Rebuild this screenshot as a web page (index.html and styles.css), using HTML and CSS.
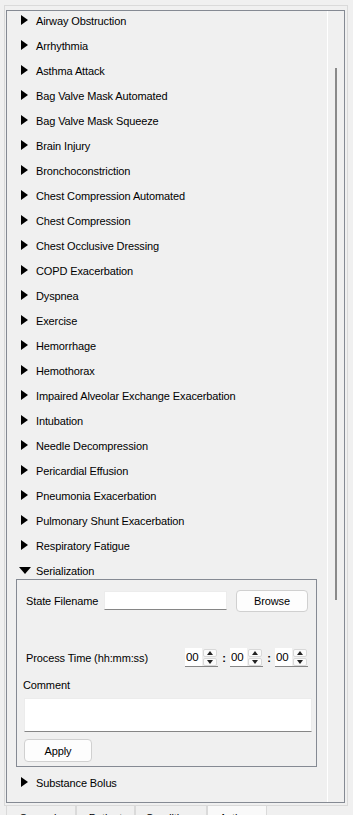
FILE: index.html
```html
<!DOCTYPE html>
<html>
<head>
<meta charset="utf-8">
<link rel="stylesheet" href="styles.css">
</head>
<body>
<div class="pane">
  <div class="scroll">
    <div class="content">
      <div class="list">
        <div class="row"><span class="tri-r"></span><span>Airway Obstruction</span></div>
        <div class="row"><span class="tri-r"></span><span>Arrhythmia</span></div>
        <div class="row"><span class="tri-r"></span><span>Asthma Attack</span></div>
        <div class="row"><span class="tri-r"></span><span>Bag Valve Mask Automated</span></div>
        <div class="row"><span class="tri-r"></span><span>Bag Valve Mask Squeeze</span></div>
        <div class="row"><span class="tri-r"></span><span>Brain Injury</span></div>
        <div class="row"><span class="tri-r"></span><span>Bronchoconstriction</span></div>
        <div class="row"><span class="tri-r"></span><span>Chest Compression Automated</span></div>
        <div class="row"><span class="tri-r"></span><span>Chest Compression</span></div>
        <div class="row"><span class="tri-r"></span><span>Chest Occlusive Dressing</span></div>
        <div class="row"><span class="tri-r"></span><span>COPD Exacerbation</span></div>
        <div class="row"><span class="tri-r"></span><span>Dyspnea</span></div>
        <div class="row"><span class="tri-r"></span><span>Exercise</span></div>
        <div class="row"><span class="tri-r"></span><span>Hemorrhage</span></div>
        <div class="row"><span class="tri-r"></span><span>Hemothorax</span></div>
        <div class="row"><span class="tri-r"></span><span>Impaired Alveolar Exchange Exacerbation</span></div>
        <div class="row"><span class="tri-r"></span><span>Intubation</span></div>
        <div class="row"><span class="tri-r"></span><span>Needle Decompression</span></div>
        <div class="row"><span class="tri-r"></span><span>Pericardial Effusion</span></div>
        <div class="row"><span class="tri-r"></span><span>Pneumonia Exacerbation</span></div>
        <div class="row"><span class="tri-r"></span><span>Pulmonary Shunt Exacerbation</span></div>
        <div class="row"><span class="tri-r"></span><span>Respiratory Fatigue</span></div>
        <div class="row row-open"><span class="tri-d"></span><span>Serialization</span></div>
        <div class="group">
          <div class="g-row1">
            <span class="lbl lbl-state">State Filename</span>
            <span class="input"></span>
            <span class="btn btn-browse">Browse</span>
          </div>
          <div class="g-row2">
            <span class="lbl lbl-time">Process Time (hh:mm:ss)</span>
            <span class="spin"><span class="spin-val">00</span><span class="spin-btns"><span class="sb sb-up"></span><span class="sb sb-down"></span></span></span>
            <span class="colon">:</span>
            <span class="spin"><span class="spin-val">00</span><span class="spin-btns"><span class="sb sb-up"></span><span class="sb sb-down"></span></span></span>
            <span class="colon">:</span>
            <span class="spin"><span class="spin-val">00</span><span class="spin-btns"><span class="sb sb-up"></span><span class="sb sb-down"></span></span></span>
          </div>
          <div class="lbl lbl-comment">Comment</div>
          <div class="textarea"></div>
          <div class="btn btn-apply">Apply</div>
        </div>
        <div class="row row-after"><span class="tri-r"></span><span>Substance Bolus</span></div>
        <div class="row"><span class="tri-r"></span><span>Substance Compound Infusion</span></div>
      </div>
    </div>
    <div class="scrollbar"><div class="handle"></div></div>
  </div>
</div>
<div class="tabs">
  <div class="tab tab1">Scenario</div>
  <div class="tab tab2">Patient</div>
  <div class="tab tab3">Conditions</div>
  <div class="tab tab4 tab-sel">Actions</div>
</div>
</body>
</html>
```
FILE: styles.css
```css
html, body {
  margin: 0;
  padding: 0;
  background: #f0f0f0;
  font-family: "Liberation Sans", Arial, sans-serif;
  font-size: 11px;
  letter-spacing: -0.12px;
  color: #000;
  overflow: hidden;
}
.pane {
  margin: 5px 5px 0 4px;
  height: 801px;
  box-sizing: border-box;
  border: 1px solid #dadada;
  padding: 4px 2px 3px 1px;
  background: #f0f0f0;
}
.scroll {
  height: 793px;
  box-sizing: border-box;
  border: 1px solid #858a93;
  display: flex;
  overflow: hidden;
}
.content {
  flex: 1;
  overflow: hidden;
}
.list {
  margin-top: -3px;
}
.row {
  height: 25px;
  display: flex;
  align-items: center;
  padding-left: 14px;
  white-space: nowrap;
}
.tri-r {
  width: 0;
  height: 0;
  border-left: 7px solid #000;
  border-top: 5.5px solid transparent;
  border-bottom: 5.5px solid transparent;
  margin-right: 8px;
  margin-top: -1px;
}
.row-open {
  height: 21px;
  padding-left: 12px;
  padding-top: 4px;
  box-sizing: border-box;
}
.tri-d {
  width: 0;
  height: 0;
  border-top: 7px solid #000;
  border-left: 6px solid transparent;
  border-right: 6px solid transparent;
  margin-right: 5px;
  margin-top: -1px;
}
.group {
  margin: 0 10px 0 9px;
  height: 188px;
  box-sizing: border-box;
  border: 1px solid #858a93;
  padding: 10px 0 0 7px;
}
.g-row1 {
  display: flex;
  align-items: center;
  height: 22px;
  padding-left: 2px;
}
.lbl-state {
  width: 78px;
}
.input {
  width: 123px;
  height: 19px;
  box-sizing: border-box;
  background: #fff;
  border: 1px solid #ececec;
  border-bottom: 1px solid #868686;
  margin-top: -1px;
}
.btn {
  box-sizing: border-box;
  border: 1px solid #d0d0d0;
  border-radius: 4px;
  background: #fdfdfd;
  display: flex;
  align-items: center;
  justify-content: center;
}
.btn-browse {
  width: 72px;
  height: 22px;
  margin-left: 9px;
}
.g-row2 {
  display: flex;
  align-items: center;
  height: 19px;
  margin-top: 36px;
  padding-left: 2px;
}
.lbl-time {
  width: 159px;
}
.spin {
  width: 33px;
  height: 19px;
  box-sizing: border-box;
  display: flex;
  border-bottom: 1px solid #868686;
  background: #fff;
}
.spin-val {
  width: 17px;
  padding-left: 1px;
  box-sizing: border-box;
  line-height: 18px;
  font-size: 11.5px;
}
.spin-btns {
  width: 16px;
  background: #f0f0f0;
  display: flex;
  flex-direction: column;
  gap: 1px;
  padding: 1px 1px 0 1px;
  box-sizing: border-box;
}
.sb {
  flex: 1;
  background: #fbfbfb;
  border: 1px solid #d8d8d8;
  border-radius: 2px;
  display: flex;
  align-items: center;
  justify-content: center;
}
.sb::after {
  content: "";
  width: 0;
  height: 0;
  border-left: 3.5px solid transparent;
  border-right: 3.5px solid transparent;
}
.sb-up::after {
  border-bottom: 4px solid #222;
}
.sb-down::after {
  border-top: 4px solid #222;
}
.colon {
  width: 12px;
  text-align: center;
  font-weight: bold;
}
.lbl-comment {
  margin-top: 11px;
  margin-left: -1px;
  height: 15px;
  line-height: 15px;
}
.textarea {
  margin-top: 5px;
  width: 288px;
  height: 34px;
  box-sizing: border-box;
  background: #fff;
  border: 1px solid #ececec;
  border-bottom: 1px solid #868686;
}
.btn-apply {
  margin-top: 7px;
  width: 68px;
  height: 23px;
}
.row-after {
  margin-top: 3px;
}
.scrollbar {
  width: 17px;
  box-sizing: border-box;
  border-left: 1px solid #fff;
  padding-left: 7px;
}
.handle {
  width: 2px;
  height: 532px;
  margin-top: 57px;
  background: #8a8a8a;
}
.tabs {
  display: flex;
  margin-left: 6px;
  height: 20px;
}
.tab {
  box-sizing: border-box;
  height: 20px;
  border: 1px solid #dadada;
  border-top: none;
  padding-top: 5px;
  text-align: center;
  background: #f0f0f0;
  overflow: hidden;
  white-space: nowrap;
  line-height: 14px;
}
.tab1 { width: 70px; }
.tab2 { width: 59px; }
.tab3 { width: 72px; }
.tab4 { width: 60px; }
.tab-sel { background: #f9f9f9; }
```
